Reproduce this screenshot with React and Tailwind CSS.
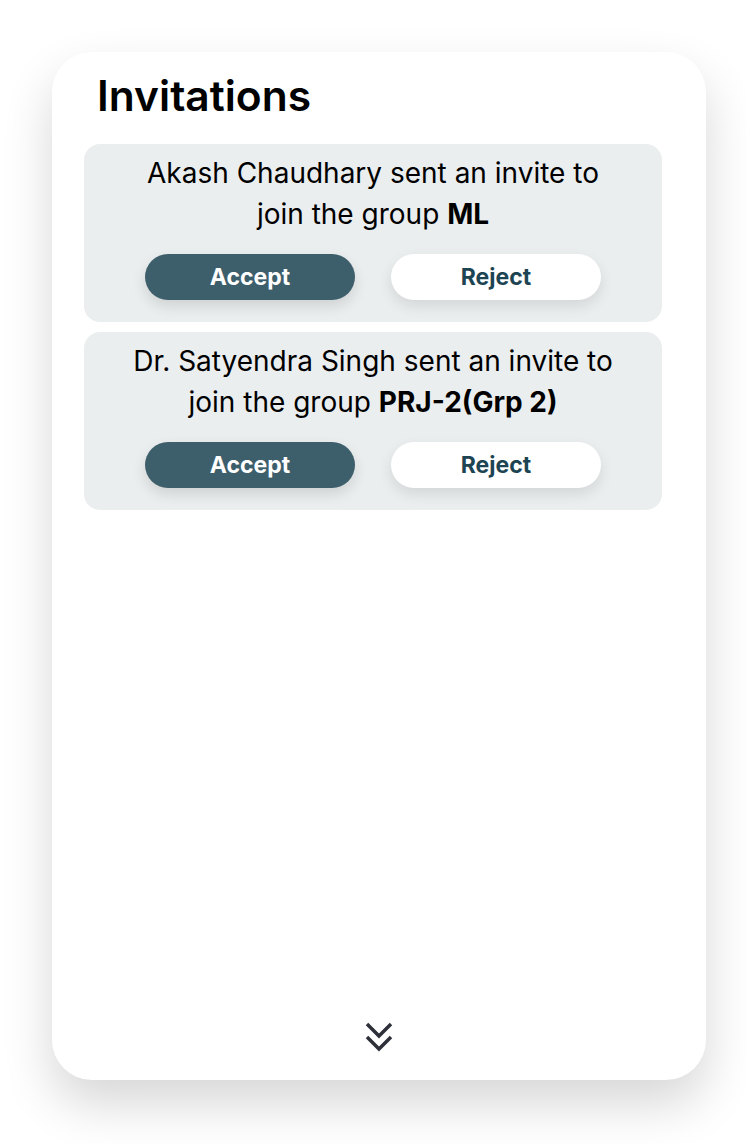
import React from "react";

const invites = [
  { from: "Akash Chaudhary", group: "ML" },
  { from: "Dr. Satyendra Singh", group: "PRJ-2(Grp 2)" },
];

const InviteCard = ({ from, group }) => (
  <div className="rounded-2xl bg-[#ebeeef] pt-[9px] pb-[22px] flex flex-col items-center">
    <p className="text-center text-[28px] leading-[41px] text-black">
      {from} sent an invite to
      <br />
      join the group <span className="font-bold">{group}</span>
    </p>
    <div className="mt-[19px] flex gap-[36px]">
      <button className="w-[210px] h-[46px] rounded-full bg-[#3d5e6b] text-white text-[23px] font-bold shadow-[0_6px_14px_rgba(0,0,0,0.12)]">
        Accept
      </button>
      <button className="w-[210px] h-[46px] rounded-full bg-white text-[#1d4452] text-[23px] font-bold shadow-[0_6px_14px_rgba(0,0,0,0.10)]">
        Reject
      </button>
    </div>
  </div>
);

export default function App() {
  return (
    <div className="min-h-[1144px] bg-white pt-[52px] pl-[52px]" style={{ fontFamily: "Inter, sans-serif" }}>
      <div className="w-[654px] h-[1028px] rounded-[40px] bg-white shadow-[0_24px_50px_rgba(0,0,0,0.16)] flex flex-col">
        {/* Header */}
        <h1 className="pl-[45px] pt-[16px] text-[42.5px] leading-[56px] font-semibold text-black">Invitations</h1>

        {/* Invite list */}
        <div className="mt-[20px] pl-[32px] pr-[44px] flex flex-col gap-[10px]">
          {invites.map((inv) => (
            <InviteCard key={inv.from} {...inv} />
          ))}
        </div>

        {/* Scroll hint */}
        <div className="mt-auto mb-[28px] flex justify-center">
          <svg width="28" height="30" viewBox="0 0 28 30" fill="none" stroke="#2e3039" strokeWidth="3.5">
            <path d="M2 2 L14 14 L26 2" />
            <path d="M2 15 L14 27 L26 15" />
          </svg>
        </div>
      </div>
    </div>
  );
}
